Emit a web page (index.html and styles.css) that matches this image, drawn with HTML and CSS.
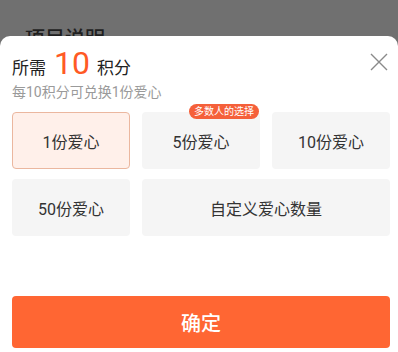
FILE: index.html
```html
<!DOCTYPE html>
<html lang="zh">
<head>
<meta charset="utf-8">
<link rel="stylesheet" href="styles.css">
</head>
<body>
<div class="backdrop">
  <div class="bg-title">项目说明</div>
</div>
<div class="sheet">
  <button class="close" aria-label="关闭">
    <svg width="18" height="18" viewBox="0 0 18 18"><path d="M1 1 L17 17 M17 1 L1 17" stroke="#8a8a8a" stroke-width="1.4" fill="none"/></svg>
  </button>
  <div class="title">
    <span class="t-label">所需</span><span class="t-num">10</span><span class="t-label">积分</span>
  </div>
  <div class="sub">每10积分可兑换1份爱心</div>
  <div class="grid">
    <div class="card selected">1份爱心</div>
    <div class="card">5份爱心<span class="badge">多数人的选择</span></div>
    <div class="card">10份爱心</div>
    <div class="card">50份爱心</div>
    <div class="card wide">自定义爱心数量</div>
  </div>
  <button class="confirm">确定</button>
</div>
</body>
</html>
```

FILE: styles.css
```css
* { box-sizing: border-box; }
html, body { margin: 0; padding: 0; }
body {
  width: 398px;
  height: 352px;
  overflow: hidden;
  background: #707070;
  font-family: Roboto, "Noto Sans CJK SC", sans-serif;
}
.backdrop {
  height: 36px;
  overflow: hidden;
  padding: 27px 0 0 25px;
}
.bg-title {
  font-size: 20px;
  line-height: 24px;
  color: #1f1f1f;
  font-weight: 500;
}
.sheet {
  position: relative;
  background: #fff;
  border-radius: 10px 10px 0 0;
  height: 316px;
  padding: 8px 8px 0 12px;
  display: flex;
  flex-direction: column;
}
.close {
  position: absolute;
  top: 17px;
  right: 10px;
  width: 18px;
  height: 18px;
  padding: 0;
  border: none;
  background: none;
  display: block;
}
.close svg { display: block; }
.title {
  display: flex;
  align-items: baseline;
  height: 38px;
  line-height: 38px;
  color: #222;
}
.t-label { font-size: 17px; }
.t-num {
  font-size: 32px;
  color: #ff5a24;
  margin: 0 7px 0 8px;
}
.sub {
  font-size: 14px;
  line-height: 20px;
  color: #9a9a9a;
}
.grid {
  margin-top: 10px;
  display: grid;
  grid-template-columns: repeat(3, 118px);
  grid-auto-rows: 57px;
  column-gap: 12px;
  row-gap: 10px;
}
.card {
  position: relative;
  background: #f5f5f5;
  border-radius: 4px;
  display: flex;
  align-items: center;
  justify-content: center;
  font-size: 16px;
  color: #333;
}
.card.selected {
  background: #fff0ea;
  border: 1px solid #ebb79f;
}
.card.wide { grid-column: span 2; }
.badge {
  position: absolute;
  top: -8px;
  right: 1px;
  height: 15px;
  line-height: 15px;
  padding: 0 5px;
  border-radius: 8px;
  background: #f5603a;
  color: #fff;
  font-size: 10px;
}
.confirm {
  margin-top: 60px;
  width: 378px;
  height: 52px;
  border: none;
  border-radius: 4px;
  background: #ff6633;
  color: #fff;
  font-family: Roboto, "Noto Sans CJK SC", sans-serif;
  font-size: 20px;
  font-weight: 500;
  padding: 0;
}
```
